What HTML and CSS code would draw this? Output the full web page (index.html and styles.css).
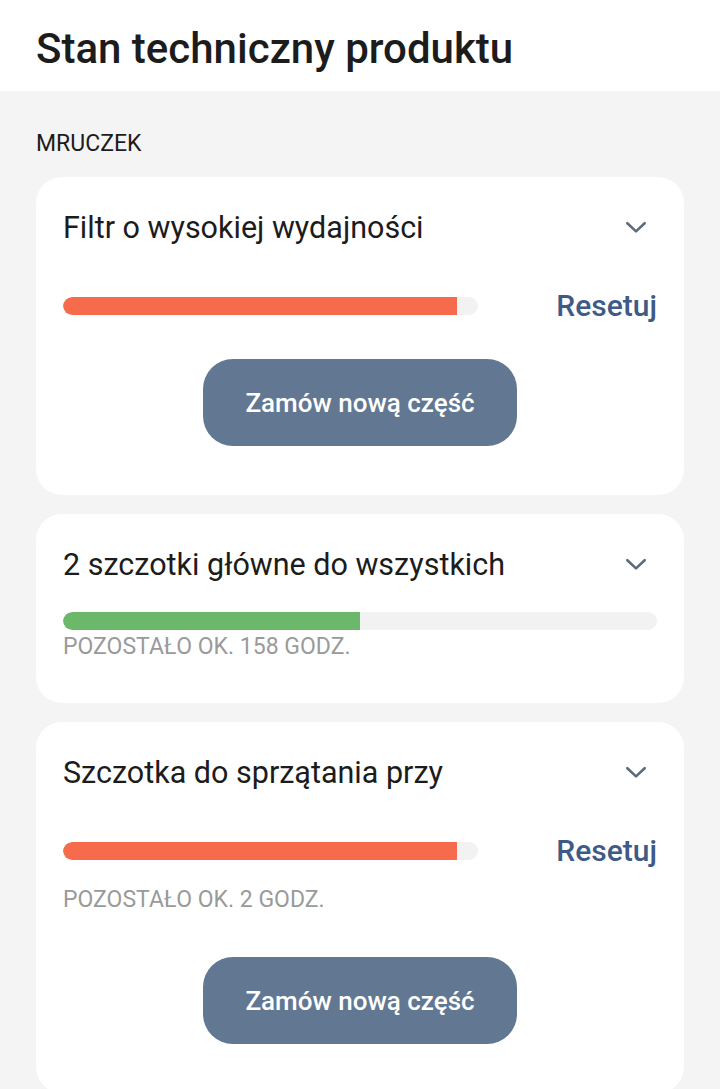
FILE: index.html
```html
<!DOCTYPE html>
<html>
<head>
	<meta charset="utf-8">
	<title>Stan techniczny produktu</title>
	<link rel="stylesheet" href="styles.css">
</head>
<body>
	<div class="topbar">
		<h1>Stan techniczny produktu</h1>
	</div>

	<div class="content">
		<p class="device">MRUCZEK</p>

		<div class="card">
			<div class="card_head">
				<span class="card_title">Filtr o wysokiej wydajności</span>
				<svg class="chevron" viewBox="0 0 24 24"><path d="M4 8.5l8 7.5 8-7.5"/></svg>
			</div>
			<div class="progress with_reset r1">
				<div class="track"><div class="fill red" style="width: 95%"></div></div>
				<span class="reset">Resetuj</span>
			</div>
			<div class="btn_row b1">
				<button class="order">Zamów nową część</button>
			</div>
		</div>

		<div class="card c2">
			<div class="card_head">
				<span class="card_title">2 szczotki główne do wszystkich</span>
				<svg class="chevron" viewBox="0 0 24 24"><path d="M4 8.5l8 7.5 8-7.5"/></svg>
			</div>
			<div class="progress p2">
				<div class="track"><div class="fill green" style="width: 50%"></div></div>
			</div>
			<p class="left p2_text">POZOSTAŁO OK. 158 GODZ.</p>
		</div>

		<div class="card">
			<div class="card_head">
				<span class="card_title">Szczotka do sprzątania przy</span>
				<svg class="chevron" viewBox="0 0 24 24"><path d="M4 8.5l8 7.5 8-7.5"/></svg>
			</div>
			<div class="progress with_reset r1">
				<div class="track"><div class="fill red" style="width: 95%"></div></div>
				<span class="reset">Resetuj</span>
			</div>
			<p class="left p3_text">POZOSTAŁO OK. 2 GODZ.</p>
			<div class="btn_row b3">
				<button class="order">Zamów nową część</button>
			</div>
		</div>
	</div>
</body>
</html>
```

FILE: styles.css
```css
* {
	margin: 0;
	padding: 0;
	box-sizing: border-box;
}
html, body {
	background: #f4f4f4;
	font-family: Roboto, "Noto Sans", sans-serif;
	color: #1c1c1c;
}

/* header */
div.topbar {
	height: 91px;
	background: white;
	padding: 24px 36px 0;
}
div.topbar h1 {
	font-size: 42px;
	font-weight: 500;
	line-height: 50px;
	letter-spacing: 0;
}

/* content */
div.content {
	padding: 0 36px;
}
p.device {
	font-size: 23px;
	line-height: 26px;
	margin: 40px 0 20px;
	color: #1c1c1c;
}
div.card {
	background: white;
	border-radius: 26px;
	padding: 30px 27px 49px;
	margin-bottom: 19px;
}
div.c2 {
	padding-bottom: 43px;
}
div.card_head {
	display: flex;
	align-items: center;
	justify-content: space-between;
	height: 40px;
}
span.card_title {
	font-size: 30.5px;
	font-weight: 400;
}
svg.chevron {
	width: 26px;
	height: 26px;
	margin-right: 8px;
	fill: none;
	stroke: #5f6b7b;
	stroke-width: 2.4;
	stroke-linecap: round;
	stroke-linejoin: round;
}

/* progress */
div.progress {
	display: flex;
	align-items: center;
}
div.r1 {
	margin-top: 39px;
	height: 40px;
}
div.p2 {
	margin-top: 28px;
}
div.track {
	flex: 1;
	height: 18px;
	border-radius: 9px;
	background: #f2f2f2;
	overflow: hidden;
}
div.with_reset div.track {
	flex: 0 0 415px;
}
div.fill {
	height: 100%;
	border-radius: 9px 0 0 9px;
}
div.red {
	background: #f56b4b;
}
div.green {
	background: #6bb86b;
}
span.reset {
	margin-left: auto;
	font-size: 30px;
	font-weight: 500;
	color: #3e5b87;
	line-height: 40px;
}
p.left {
	font-size: 23px;
	line-height: 26px;
	color: #9a9a9a;
}
p.p2_text {
	margin-top: 4px;
}
p.p3_text {
	margin-top: 16px;
}

/* button */
div.btn_row {
	display: flex;
	justify-content: center;
}
div.b1 {
	margin-top: 33px;
}
div.b3 {
	margin-top: 44px;
}
button.order {
	width: 314px;
	height: 87px;
	border: none;
	border-radius: 30px;
	background: #627791;
	color: white;
	font-family: Roboto, "Noto Sans", sans-serif;
	font-size: 26px;
	font-weight: 500;
}
```
